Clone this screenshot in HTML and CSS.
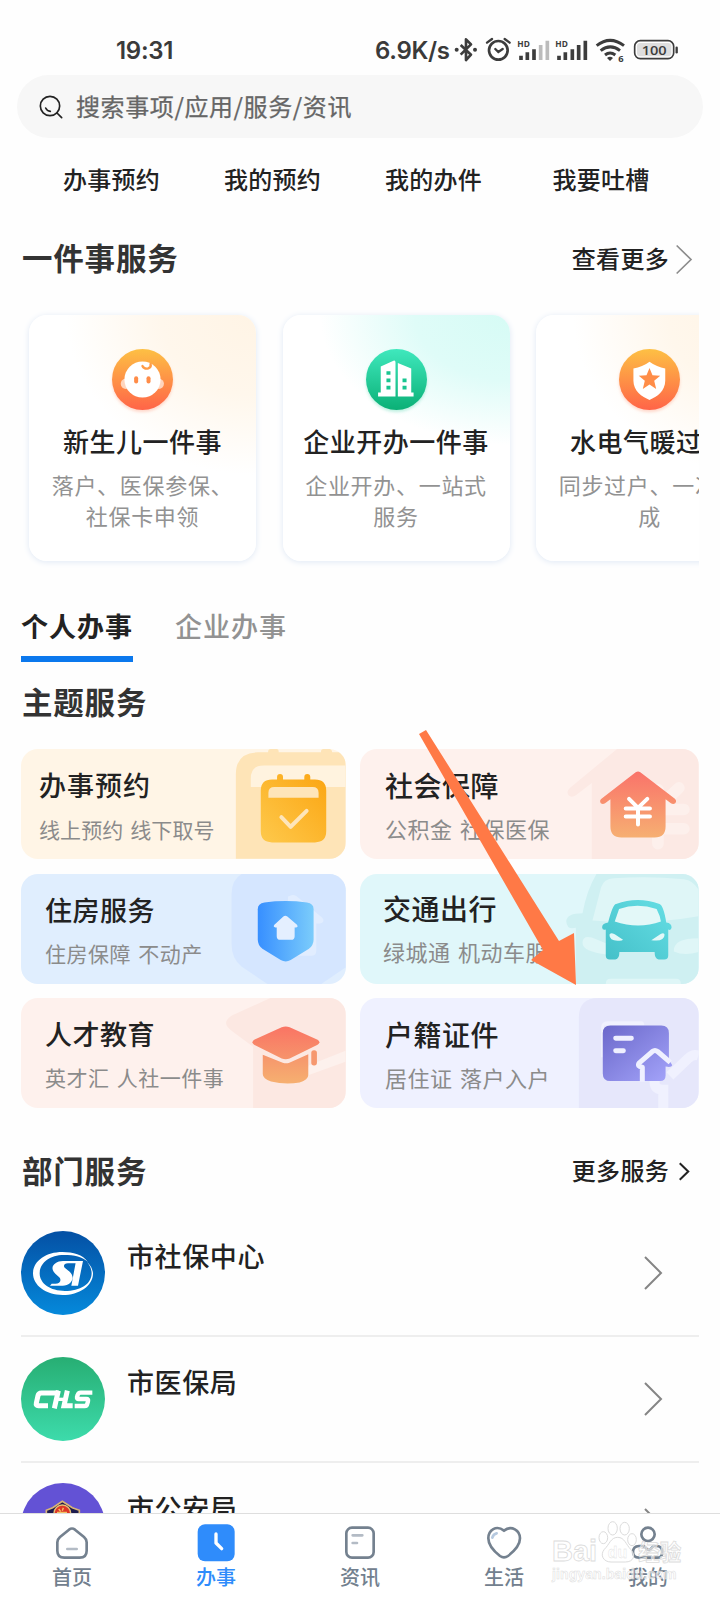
FILE: index.html
```html
<!DOCTYPE html>
<html lang="zh-CN">
<head>
<meta charset="utf-8">
<title>办事</title>
<link rel="stylesheet" href="styles.css">
</head>
<body>
<div class="page">
  <header class="status">
    <span class="clock">19:31</span>
    <span class="speed">6.9K/s</span>
    <svg class="status-icons" viewBox="280 48 681 84" fill="none" stroke="#3c3c3c">
      <path d="M303 75l31 29-15 16V58l15 15-31 31" stroke-width="8" stroke-linejoin="round"/>
      <g fill="#3c3c3c" stroke="none"><circle cx="291" cy="89" r="6"/><circle cx="346" cy="89" r="6"/></g>
      <circle cx="416" cy="91" r="28" stroke-width="8"/>
      <path d="M407 87l9 9 13-9M382 68l15-11M450 68l-15-11" stroke-width="7" stroke-linecap="round"/>
      <g class="status-text"><text x="473" y="80">HD</text><text x="587" y="80">HD</text></g>
      <g stroke-width="11"><path d="M484 107v13M503 97v23M523 88v32M598 107v13M617 97v23M638 88v32M657 75v45M677 62v58"/><path stroke="#bbb" d="M543 75v45M563 62v58"/></g>
      <path d="M711 77q40-32 82 0M723 92q29-23 58 0M736 105q15-12 31 0" stroke-width="9"/>
      <path d="M742 114q9-7 18 0l-9 9z" fill="#3c3c3c" stroke="none"/>
      <text class="wifi-six" x="776" y="125">6</text>
      <rect x="825" y="62" width="117" height="54" rx="17" stroke-width="5"/>
      <rect x="832" y="69" width="103" height="40" rx="10" fill="#dedede" stroke="none"/>
      <path d="M951 83v14" stroke-width="7" stroke-linecap="round"/>
      <text class="charge" x="846" y="104" textLength="75" lengthAdjust="spacingAndGlyphs">100</text>
    </svg>
  </header>

  <div class="search">
    <svg class="search-icon" viewBox="114 222 78 78" fill="none" stroke="#222" stroke-width="5" stroke-linecap="round">
      <circle cx="150" cy="258" r="29"/><path d="M171 279l14 14M137 264q4 9 14 10"/>
    </svg>
    <span>搜索事项/应用/服务/资讯</span>
  </div>

  <nav class="quick">
    <a>办事预约</a><a>我的预约</a><a>我的办件</a><a>我要吐槽</a>
  </nav>

  <div class="head head-first">
    <h2>一件事服务</h2>
    <a class="more"><span>查看更多</span>
      <svg class="more-thin" viewBox="944 672 54 92" fill="none" stroke="#8c8c8c" stroke-width="5"><path d="M949 676l43 42-43 42"/></svg>
    </a>
  </div>

  <div class="carousel">
    <article class="card warm">
      <svg class="badge" viewBox="324 132 212 212">
        <defs>
          <linearGradient id="orange" x2="0" y2="1"><stop stop-color="#fdc044"/><stop offset="1" stop-color="#ff6448"/></linearGradient>
          <linearGradient id="green" x2="0" y2="1"><stop stop-color="#3fe8bd"/><stop offset="1" stop-color="#0bb076"/></linearGradient>
        </defs>
        <circle class="glow-orange" cx="430" cy="238" r="91" fill="url(#orange)"/>
        <circle cx="380" cy="251" r="15" fill="#ffd5bd"/><circle cx="479" cy="251" r="15" fill="#ffd5bd"/>
        <circle cx="430" cy="238" r="54" fill="#fff"/>
        <path d="M430 198q6 10 17 7 10-4 7-13" fill="none" stroke="#ff9c47" stroke-width="7" stroke-linecap="round"/>
        <rect x="405" y="228" width="12" height="22" rx="6" fill="#ff8c48"/><rect x="442" y="228" width="12" height="22" rx="6" fill="#ff8c48"/>
      </svg>
      <h3>新生儿一件事</h3>
      <p>落户、医保参保、<br>社保卡申领</p>
    </article>
    <article class="card mint">
      <svg class="badge" viewBox="5 132 212 212">
        <circle class="glow-green" cx="111" cy="238" r="91" fill="url(#green)"/>
        <path fill="#fff" d="M56 277h8v-78l38-17q6-2 6 5v102H56zM115 286v-97l40 16v72h7v12h-47z"/>
        <path fill="#19c590" d="M81 213h12v11H81zM81 235h12v11H81zM81 257h12v11H81zM129 235h12v11h-12zM129 257h12v11h-12z"/>
      </svg>
      <h3>企业开办一件事</h3>
      <p>企业开办、一站式<br>服务</p>
    </article>
    <article class="card warm">
      <svg class="badge" viewBox="765 132 212 212">
        <circle class="glow-orange" cx="871" cy="238" r="91" fill="url(#orange)"/>
        <path fill="#fff" d="M871 185q22 16 47 20v37c0 30-24 48-47 57-23-9-48-27-48-57v-37q27-4 48-20z"/>
        <path fill="#ff8d48" d="M871 204l9 21 23 2-18 15 6 24-20-13-20 13 6-24-18-15 23-2z"/>
      </svg>
      <h3>水电气暖过户</h3>
      <p>同步过户、一次办<br>成</p>
    </article>
  </div>

  <div class="tabs"><a class="tab on">个人办事</a><a class="tab">企业办事</a></div>

  <h2 class="theme-head">主题服务</h2>
  <section class="themes">
    <a class="tile t1">
      <svg class="art" viewBox="63 478 975 331">
        <defs><linearGradient id="g1" x1="0" y1="1" x2="1" y2="0"><stop stop-color="#fec94c"/><stop offset="1" stop-color="#fba511"/></linearGradient></defs>
        <path fill="#fee4b7" d="M708 808V555q0-67 67-67h30q0-10 8-10h18q6 0 6 10h127q0-10 8-10h18q6 0 8 10h40v320z"/>
        <path fill="#fff3df" d="M753 592v-26q0-38 38-38h247v64z"/>
        <path fill="url(#g1)" d="M832 570v-8q0-9 9-9t9 9v8h64v-8q0-9 9-9t9 9v8h14q34 0 34 34v121q0 34-34 34H817q-34 0-34-34V604q0-34 34-34z"/>
        <path fill="#fee5b9" d="M806 625v-15q0-18 18-18h115q18 0 18 18v15z"/>
        <path d="M845 683l28 29 48-48" fill="none" stroke="#fee5b9" stroke-width="12" stroke-linecap="round" stroke-linejoin="round"/>
      </svg>
      <h3>办事预约</h3><p>线上预约 线下取号</p>
    </a>
    <a class="tile t2">
      <svg class="art" viewBox="0 88 1017 331">
        <defs><linearGradient id="g2" x2="0" y2="1"><stop stop-color="#fa736a"/><stop offset="1" stop-color="#f6af72"/></linearGradient></defs>
        <path fill="#fce9e4" d="M772 88L630 205q-12 11-4 22 9 9 22 0l48-37v229h321V88z"/>
        <g fill="none" stroke="#fdf0ec" stroke-width="35" stroke-linecap="round"><path d="M900 260l58-55M895 270h78M895 328h78M895 210v163"/></g>
        <path fill="url(#g2)" d="M828 158q7-5 14 0l104 80q7 7 1 13-6 5-13 0l-16-12v82q0 33-33 33H785q-33 0-33-33v-82l-16 12q-7 5-13 0-5-7 2-13z"/>
        <path d="M808 238l27 27 28-27M798 267h73M798 291h73M835 267v48" fill="none" stroke="#fff" stroke-width="12" stroke-linecap="round"/>
      </svg>
      <h3>社会保障</h3><p>公积金 社保医保</p>
    </a>
    <a class="tile t3">
      <svg class="art" viewBox="63 42 975 331">
        <defs><linearGradient id="g3" x2="1"><stop stop-color="#378fff"/><stop offset="1" stop-color="#7bccfb"/></linearGradient></defs>
        <path fill="#d5e6ff" d="M725 42q-30 18-30 60v150q0 45 30 68l78 53h162l73-50V42z"/>
        <path fill="#e1edff" d="M870 108q10-5 20 0l78 66q10 12-6 17h-12v82q0 15-15 15h-70V110z"/>
        <path fill="url(#g3)" d="M774 148q0-17 20-20 64-9 128 0 20 3 20 20v91q0 17-14 28l-55 34q-15 9-30 0l-55-34q-14-11-14-28z"/>
        <path fill="#e4efff" d="M851 170q6-5 12 0l29 25q5 8-4 8h-3v26q0 11-11 11h-32q-11 0-11-11v-26h-4q-8-1-3-8z"/>
      </svg>
      <h3>住房服务</h3><p>住房保障 不动产</p>
    </a>
    <a class="tile t4">
      <svg class="art" viewBox="0 462 1017 331">
        <defs><linearGradient id="g4" x1="1" y1="0" x2="0" y2="1"><stop stop-color="#66dfe5"/><stop offset="1" stop-color="#43bfc8"/></linearGradient></defs>
        <path fill="#cff0f2" d="M710 462q-29 48-42 118-47 0-49 24 2 27 29 20v169h369V462z"/>
        <path fill="#dff6f7" d="M698 602l26-100q8-26 38-27 105-8 211 3 27 3 44 31v80q-160 28-319 13zM668 668q1-22 28-15l46 19v32q-75-8-74-36zM1017 655q-77 0-74 40 30 14 74 2zM738 793q0-16 14-16h198q14 0 14 16z"/>
        <path fill="url(#g4)" d="M745 608q14-55 24-56 65-23 131 0 12 5 20 56 17 2 16 16-2 9-10 5v78q0 12-12 12h-17q-12 0-12-22H779q0 22-12 22h-17q-12 0-12-12v-78q-10 3-11-6-1-12 18-15z"/>
        <path fill="#e3f8f8" d="M765 605l13-38q55-19 113 0 11 21 13 38-68 24-139 0zM749 645q2-9 16-2l25 17-4 2q-37 5-37-17zM915 645q-1-8-13-2l-27 18q39 6 40-16z"/>
      </svg>
      <h3>交通出行</h3><p>绿城通 机动车服务</p>
    </a>
    <a class="tile t5">
      <svg class="art" viewBox="63 416 975 331">
        <defs><linearGradient id="g5" x2="0" y2="1"><stop stop-color="#fa7464"/><stop offset="1" stop-color="#f6946b"/></linearGradient><linearGradient id="g5b" x2="0" y2="1"><stop stop-color="#f6946c"/><stop offset="1" stop-color="#f6b070"/></linearGradient></defs>
        <path fill="#fce8e2" d="M812 416l-116 53q-35 22 0 46l64 48v184h278V416z"/>
        <path fill="#fdf1ed" d="M1038 575l-110 43-15 35 125-45z"/>
        <path fill="url(#g5)" d="M846 504q12-5 24 0l84 38q11 7 0 15l-84 41q-12 5-24 0l-83-41q-10-8 0-15z"/>
        <path fill="url(#g5b)" d="M789 587l60 24q10 3 20 0l57-26v63q0 15-26 22-43 8-86-3-25-7-25-22z"/>
        <rect x="935" y="573" width="17" height="46" rx="8" fill="#f6986f"/>
      </svg>
      <h3>人才教育</h3><p>英才汇 人社一件事</p>
    </a>
    <a class="tile t6">
      <svg class="art" viewBox="0 56 1017 331">
        <defs><linearGradient id="g6" x2="1" y2="1"><stop stop-color="#6b68ca"/><stop offset="1" stop-color="#a5a5fb"/></linearGradient></defs>
        <path fill="#e6e7fb" d="M657 387V115q0-59 59-59h301v331z"/>
        <path fill="#f0f1fe" d="M724 234v-88q0-20 20-20h100q10 0 10 13H733v95z"/>
        <path d="M885 290v20q0 22 26 22v55M931 290l55-52q15-15 31-9" fill="none" stroke="#f0f1fe" stroke-width="30"/>
        <path fill="url(#g6)" d="M752 139h153q23 0 23 23v79l10 17q-2 8-20 4v27q0 17-17 17H752q-23 0-23-23V162q0-23 23-23z"/>
        <path d="M768 177h47M768 215h23" stroke="#eff0ff" stroke-width="15" stroke-linecap="round"/>
        <path d="M848 308v-44q-17-2-9-13l39-34q8-6 16 0l38 33" fill="none" stroke="#eff0ff" stroke-width="15" stroke-linejoin="round"/>
      </svg>
      <h3>户籍证件</h3><p>居住证 落户入户</p>
    </a>
  </section>

  <div class="head head-dept">
    <h2>部门服务</h2>
    <a class="more"><span>更多服务</span>
      <svg class="more-bold" viewBox="954 548 38 56" fill="none" stroke="#222" stroke-width="6"><path d="M959 552l25 24-25 24"/></svg>
    </a>
  </div>

  <ul class="list">
    <li>
      <svg class="logo" viewBox="63 273 252 252">
        <defs><linearGradient id="l1" x2="0" y2="1"><stop stop-color="#0450a4"/><stop offset="1" stop-color="#0589db"/></linearGradient></defs>
        <circle cx="189" cy="399" r="126" fill="url(#l1)"/>
        <path fill="#fff" d="M264 366C248 344 220 336 187 336c-50 0-88 28-88 64s38 65 89 65c50 0 92-28 91-66q-3-20-18-33 13 15 14 33c0 34-35 54-80 54-44 0-76-22-76-53s31-55 72-55c33 0 56 5 73 21z"/>
        <path fill="#fff" d="M229 363l-2 7h-23c-12 0-16 9-8 15l13 10c19 17 5 42-21 42h-38l5-6h11c14 0 21-12 10-21l-10-9c-20-18-2-38 23-38zM228 363h21l-15 74h-20z"/>
      </svg>
      <span>市社保中心</span>
      <svg class="go" viewBox="0 0 20 34"><path d="M1 1l16 16L1 33"/></svg>
    </li>
    <li>
      <svg class="logo" viewBox="63 651 252 252">
        <defs><linearGradient id="l2" x2="0" y2="1"><stop stop-color="#27ae73"/><stop offset="1" stop-color="#3ddbab"/></linearGradient></defs>
        <circle cx="189" cy="777" r="126" fill="url(#l2)"/>
        <g fill="none" stroke="#fff" stroke-width="15"><path stroke-linejoin="round" d="M144 797h-29q-8 0-6-8l5-22q2-8 10-8h52"/><path d="M175 752l-12 53M202 752l-10 45h26"/><path d="M168 778h30" stroke-width="10"/><path stroke-width="13" stroke-linejoin="round" d="M277 758h-35q-7 0-9 7l-2 6q-1 6 5 6h23q7 0 5 7l-2 7q-1 7-8 7h-30"/></g>
      </svg>
      <span>市医保局</span>
      <svg class="go" viewBox="0 0 20 34"><path d="M1 1l16 16L1 33"/></svg>
    </li>
    <li>
      <svg class="logo" viewBox="63 99 252 252">
        <circle cx="189" cy="225" r="126" fill="#6352d5"/>
        <path d="M139 205v-24l19-8 29-19 30 19 21 8v24z" fill="#1d1b4e" stroke="#d8b477" stroke-width="5"/>
        <circle cx="187" cy="190" r="25" fill="#dc3528" stroke="#e8bf73" stroke-width="4"/>
        <path d="M176 177l6 7M190 173l-3 9M171 187h30" stroke="#f3c465" stroke-width="4"/>
      </svg>
      <span>市公安局</span>
      <svg class="go" viewBox="0 0 20 34"><path d="M1 1l16 16L1 33"/></svg>
    </li>
  </ul>

  <nav class="tabbar">
    <a><svg viewBox="159 222 114 114" fill="none" stroke="#74818f" stroke-width="8" stroke-linecap="round" stroke-linejoin="round"><path d="M207 239q9-7 18 0l27 22q8 7 8 16v25q0 21-21 21h-46q-21 0-21-21v-25q0-9 8-16z"/><path d="M202 297h28" stroke="#b3bbc5"/></svg>首页</a>
    <a class="on"><svg viewBox="591 222 114 114" fill="none"><rect x="593" y="223" width="111" height="111" rx="22" fill="#2f8cfb"/><path d="M648 252v27l17 17" stroke="#fff" stroke-width="10" stroke-linecap="round" stroke-linejoin="round"/></svg>办事</a>
    <a><svg viewBox="-57 222 114 114" fill="none" stroke="#74818f" stroke-width="8" stroke-linecap="round"><rect x="-41" y="233" width="82" height="90" rx="17"/><path d="M-22 256H7M-22 279h13" stroke="#b3bbc5"/></svg>资讯</a>
    <a><svg viewBox="375 222 114 114" fill="none" stroke="#74818f" stroke-width="8" stroke-linecap="round"><path d="M432 242c23-18 48 0 48 23 0 21-19 40-36 53q-12 8-24 0c-17-13-35-32-35-53 0-25 24-41 47-23z"/><path d="M397 263q3-11 13-13" stroke="#b6c9df"/></svg>生活</a>
    <a><svg viewBox="807 222 114 114" fill="none" stroke="#74818f" stroke-width="8" stroke-linecap="round"><circle cx="864" cy="253" r="20"/><path d="M851 288l10 10q5 4 10 0l10-10h8q18 0 18 18t-18 17h-52q-18 0-18-17t18-18z"/></svg>我的</a>
  </nav>

  <svg class="arrow" viewBox="410 725 175 265"><path fill="#ff7946" d="M419 734l7-4 133 211 15-8 2 52-45-25 12-10z"/></svg>

  <div class="watermark">
    <div class="wm-top"><span>Bai</span>
      <svg class="paw" viewBox="703 212 123 132"><ellipse cx="722" cy="265" rx="13" ry="18"/><ellipse cx="750" cy="237" rx="14" ry="20"/><ellipse cx="786" cy="238" rx="14" ry="19"/><ellipse cx="808" cy="271" rx="13" ry="18"/><path d="M765 264c-21 0-25 22-40 36-14 17-3 38 20 38h43c25 0 32-20 17-37-16-16-19-37-40-37z"/><text x="735" y="326">du</text></svg>
      <span class="wm-cn">经验</span></div>
    <div class="wm-url">jingyan.baidu.com</div>
  </div>
</div>
</body>
</html>
```
FILE: styles.css
```css
* { box-sizing: border-box; margin: 0; padding: 0; }
body { background: #fff; font-family: "Noto Sans CJK SC", sans-serif; color: #222; }
.page { position: relative; width: 720px; height: 1600px; overflow: hidden; display: flex; flex-direction: column; background: #fefefe; white-space: nowrap; }
h2, h3 { font-weight: 500; }
h2 { font-weight: 700; font-size: 30.5px; letter-spacing: .8px; line-height: 40px; color: #333; }
svg { display: block; }

.status { height: 75px; padding-top: 37px; display: flex; font: 600 24px/28px "Inter", sans-serif; color: #3a3a3a; flex: none; }
.clock { width: 259px; margin-left: 116px; letter-spacing: -.3px; }
.speed { width: 78px; letter-spacing: -.3px; }
.status-icons { width: 227px; height: 28px; margin-top: -1px; }
.status-text { font: 700 25px "Open Sans", sans-serif; fill: #3c3c3c; stroke: none; }
.wifi-six { font: 700 28px "Open Sans", sans-serif; fill: #3c3c3c; stroke: none; }
.charge { font: 600 40px "Open Sans", sans-serif; fill: #3c3c3c; stroke: none; }

.search { flex: none; height: 63px; margin: 0 17px; padding-left: 21px; border-radius: 32px; background: #f7f7f7; display: flex; align-items: center; gap: 12px; font-size: 24px; letter-spacing: .6px; color: #666; }
.search-icon { width: 26px; height: 26px; }
.search span { padding-bottom: 2px; -webkit-text-stroke: .25px #666; }

.quick { flex: none; height: 84px; padding: 0 29px 4px 31px; display: grid; grid-template-columns: 161px 161px 161px 174px; align-items: center; text-align: center; font-size: 24px; font-weight: 500; letter-spacing: .3px; }

.head { flex: none; display: flex; justify-content: space-between; align-items: center; padding: 0 27px 0 22px; }
.head h2, .more span { position: relative; top: -2px; }
.head-first { height: 74px; }
.more { display: flex; align-items: center; font-size: 24px; font-weight: 500; letter-spacing: .3px; }
.more-thin { width: 18px; height: 31px; margin-left: 6px; }
.more-bold { width: 13px; height: 19px; margin: 0 2px 0 9px; }

.carousel { flex: none; width: 699px; height: 285px; padding: 19px 0 20px 29px; display: flex; gap: 26.5px; overflow: hidden; }
.card { flex: none; width: 227px; height: 246px; border-radius: 18px; background: #fff; box-shadow: 0 1px 6px #dfe8f5; padding-top: 29px; display: flex; flex-direction: column; align-items: center; text-align: center; }
.warm { background: radial-gradient(ellipse 190px 160px at 100% 0, #fff4e5 0, #fff7ec 50%, #fff 100%); }
.mint { background: radial-gradient(ellipse 190px 130px at 100% 0, #d6fbf5 0, #dffcf8 50%, #fff 100%); }
.badge { width: 71px; height: 71px; overflow: visible; }
.glow-orange { filter: drop-shadow(0 6px 5px #ff704844); }
.glow-green { filter: drop-shadow(0 6px 5px #18c59044); }
.card h3 { margin-top: 6px; font-size: 26px; line-height: 40px; letter-spacing: .5px; }
.card p { margin-top: 8px; font-size: 22px; line-height: 31px; letter-spacing: .7px; color: #929292; }

.tabs { flex: none; height: 81px; padding: 25px 21px 0; display: flex; gap: 42px; }
.tab { height: 56px; font-size: 27px; line-height: 40px; letter-spacing: 1px; font-weight: 500; color: #929292; }
.tab.on { border-bottom: 6px solid #0b78ed; color: #222; font-weight: 700; }
.theme-head { flex: none; height: 87px; padding: 19px 22px 0; }

.themes { flex: none; display: grid; grid-template-columns: 325px 339px; grid-auto-rows: 110px; gap: 14.7px 14px; padding-left: 21px; height: 360px; }
.tile { position: relative; border-radius: 17px; overflow: hidden; padding: 16px 0 0 24px; }
.tile h3 { position: relative; font-size: 27px; line-height: 40px; letter-spacing: .5px; }
.tile p { position: relative; margin-top: 6px; font-size: 21px; line-height: 34px; letter-spacing: .5px; word-spacing: 2px; color: #8b8b8b; }
.art { position: absolute; inset: 0; width: 100%; height: 100%; }
.tile.t1 { background: #fff5e6; padding-left: 18px; }
.tile.t1 h3 { letter-spacing: 1px; }
.tile.t1 p { letter-spacing: .1px; margin-top: 7px; }
.t2 { background: #fef1ed; }
.t3 { background: #e0eefe; }
.t4 { background: #e0f7fa; }
.t5 { background: #fef1ed; }
.t6 { background: #eff1ff; }
.t2, .t6 { padding-left: 25px; }
.t2 h3, .t4 h3, .t6 h3 { font-size: 28px; }
.t2 p, .t4 p, .t6 p { font-size: 22px; }
.tile.t4 { padding: 14px 0 0 23px; }
.t4 p { width: 161px; overflow: hidden; }

.head-dept { height: 102px; padding-top: 23px; }
.list { list-style: none; height: 302px; flex: none; overflow: hidden; padding: 0 21px; }
.list li { display: flex; height: 126px; border-bottom: 2px solid #eee; padding: 20px 35px 0 0; }
.list span { margin-left: 22px; flex: 1; font-size: 27px; line-height: 49px; letter-spacing: .6px; font-weight: 500; }
.logo { width: 84px; height: 84px; }
.go { width: 20px; height: 34px; margin-top: 25px; fill: none; stroke: #858585; stroke-width: 2; }

.tabbar { flex: none; height: 88px; border-top: 1px solid #dedede; display: grid; grid-template-columns: repeat(5, 1fr); padding-top: 10px; background: #fff; }
.tabbar a { display: flex; flex-direction: column; align-items: center; font-size: 20px; line-height: 30px; color: #72808e; font-weight: 500; }
.tabbar svg { width: 38px; height: 38px; }
.tabbar .on { color: #2f8cfb; }

.arrow { position: absolute; left: 410px; top: 725px; width: 175px; height: 265px; }
.watermark { position: absolute; left: 552px; top: 1520px; width: 135px; color: #ffffff90; -webkit-text-stroke: .8px #dcdcdc; font-family: "Liberation Sans", sans-serif; font-weight: 700; }
.wm-top { height: 44px; display: flex; align-items: flex-start; font-size: 29px; line-height: 62px; }
.paw { width: 41px; height: 44px; flex: none; fill: #ffffff90; stroke: #dcdcdc; stroke-width: 3; }
.paw text { font-size: 48px; stroke-width: 1; }
.wm-cn { font: 700 21.5px/62px "Noto Sans CJK SC", sans-serif; }
.wm-url { font-size: 14px; line-height: 16px; margin-top: 2px; letter-spacing: .1px; -webkit-text-stroke: .5px #dcdcdc; }
```
